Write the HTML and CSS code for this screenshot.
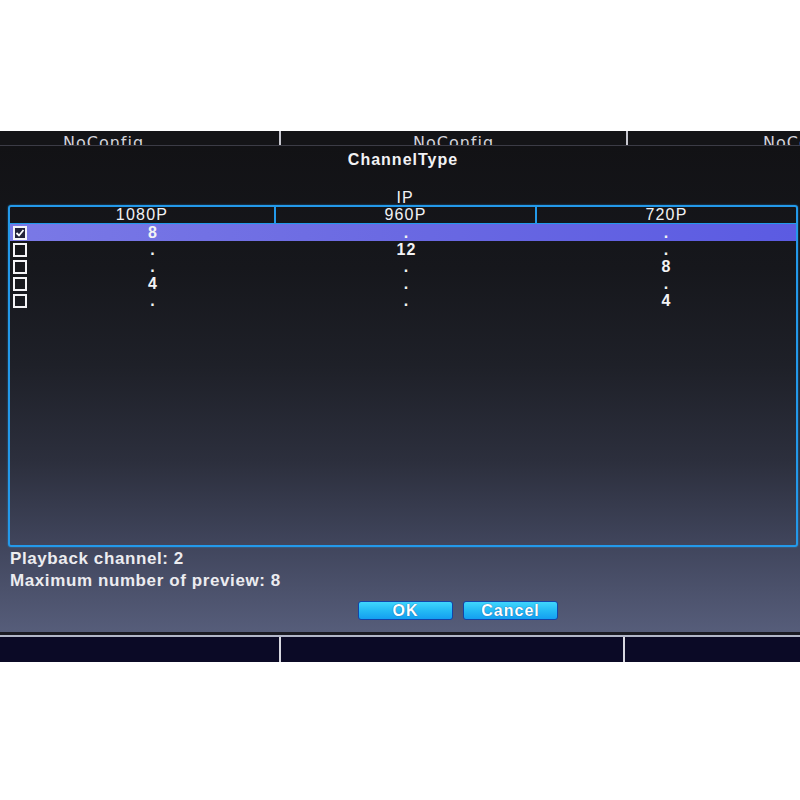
FILE: index.html
```html
<!DOCTYPE html>
<html>
<head>
<meta charset="utf-8">
<title>ChannelType</title>
<link rel="stylesheet" href="styles.css">
</head>
<body>
<div class="screen">
  <div class="strip-top">
    <div class="tcell t1"><span>NoConfig</span></div>
    <div class="tcell t2"><span>NoConfig</span></div>
    <div class="tcell t3"><span>NoConfig</span></div>
  </div>
  <div class="dialog">
    <div class="title">ChannelType</div>
    <div class="ip">IP</div>
    <div class="table">
      <div class="thead">
        <div class="th">1080P</div>
        <div class="th">960P</div>
        <div class="th last">720P</div>
      </div>
      <div class="row sel">
        <div class="cb"><svg width="14" height="14" viewBox="0 0 14 14"><rect x="1" y="1" width="12" height="12" fill="#23233a" stroke="#f4f4f8" stroke-width="2"/><polyline points="3.5,7 6,9.5 10.5,4" fill="none" stroke="#ffffff" stroke-width="1.8"/></svg></div>
        <div class="td">8</div><div class="td">.</div><div class="td">.</div>
      </div>
      <div class="row">
        <div class="cb"><svg width="14" height="14" viewBox="0 0 14 14"><rect x="1" y="1" width="12" height="12" fill="none" stroke="#f4f4f8" stroke-width="2"/></svg></div>
        <div class="td">.</div><div class="td">12</div><div class="td">.</div>
      </div>
      <div class="row">
        <div class="cb"><svg width="14" height="14" viewBox="0 0 14 14"><rect x="1" y="1" width="12" height="12" fill="none" stroke="#f4f4f8" stroke-width="2"/></svg></div>
        <div class="td">.</div><div class="td">.</div><div class="td">8</div>
      </div>
      <div class="row">
        <div class="cb"><svg width="14" height="14" viewBox="0 0 14 14"><rect x="1" y="1" width="12" height="12" fill="none" stroke="#f4f4f8" stroke-width="2"/></svg></div>
        <div class="td">4</div><div class="td">.</div><div class="td">.</div>
      </div>
      <div class="row">
        <div class="cb"><svg width="14" height="14" viewBox="0 0 14 14"><rect x="1" y="1" width="12" height="12" fill="none" stroke="#f4f4f8" stroke-width="2"/></svg></div>
        <div class="td">.</div><div class="td">.</div><div class="td">4</div>
      </div>
    </div>
    <div class="info">
      <div class="line">Playback channel: 2</div>
      <div class="line">Maximum number of preview: 8</div>
    </div>
    <div class="buttons">
      <div class="btn">OK</div>
      <div class="btn">Cancel</div>
    </div>
  </div>
  <div class="strip-bottom">
    <div class="bcells">
      <div class="bcell b1"></div>
      <div class="bcell b2"></div>
      <div class="bcell b3"></div>
    </div>
  </div>
</div>
</body>
</html>
```

FILE: styles.css
```css
html, body {
  margin: 0;
  padding: 0;
  background: #ffffff;
}

.screen {
  margin-top: 131px;
  width: 800px;
  height: 531px;
  overflow: hidden;
  display: flex;
  flex-direction: column;
  font-family: "Liberation Sans", Arial, sans-serif;
  color: #f2f2f4;
}

/* top strip behind the dialog */
.strip-top {
  height: 14px;
  flex: none;
  display: grid;
  grid-template-columns: 281px 347px 1fr;
  background: #141417;
  overflow: hidden;
}

.tcell {
  font-family: "DejaVu Sans", sans-serif;
  font-size: 16px;
  line-height: 18px;
  letter-spacing: 1px;
  color: #d4d4dc;
  padding-top: 3px;
  white-space: nowrap;
  overflow: hidden;
}

.t1 {
  border-right: 2px solid #c8c8d0;
  padding-left: 63px;
}

.t2 {
  border-right: 2px solid #c8c8d0;
  text-align: center;
}

.t3 {
  padding-left: 135px;
}

/* dialog */
.dialog {
  height: 487px;
  flex: none;
  box-sizing: border-box;
  border-top: 1px solid #3c3c46;
  background: linear-gradient(180deg, #121215 0%, #16171c 25%, #1e2028 45%, #2c2f3d 65%, #40455c 82%, #565d7a 100%);
  display: flex;
  flex-direction: column;
}

.title {
  padding-top: 4px;
  padding-left: 6px;
  font-size: 16px;
  line-height: 20px;
  font-weight: bold;
  letter-spacing: 1px;
  text-align: center;
}

.ip {
  margin-top: 20px;
  padding-left: 10px;
  font-size: 16px;
  line-height: 15px;
  letter-spacing: 1px;
  text-align: center;
}

.table {
  margin: 0 2px 0 8px;
  height: 342px;
  box-sizing: border-box;
  border: 2px solid #2399ea;
  border-radius: 3px;
  box-shadow: 0 0 2px rgba(40, 170, 255, 0.6);
}

.thead {
  display: grid;
  grid-template-columns: 266px 261px 1fr;
  height: 17px;
  box-sizing: border-box;
  border-bottom: 1px solid #2399ea;
}

.th {
  font-size: 16px;
  line-height: 16px;
  letter-spacing: 1.2px;
  text-align: center;
  border-right: 2px solid #2399ea;
}

.th.last {
  border-right: none;
}

.row {
  display: grid;
  grid-template-columns: 20px 246px 261px 1fr;
  height: 17px;
  align-items: center;
}

.row.sel {
  background: linear-gradient(90deg, #7a79e6 0%, #6a69e2 50%, #5b5be2 100%);
}

.cb {
  padding-left: 3px;
  height: 14px;
}

.cb svg {
  display: block;
}

.td {
  font-size: 16px;
  line-height: 17px;
  font-weight: bold;
  letter-spacing: 1px;
  text-align: center;
}

.info {
  margin-top: 1px;
  padding-left: 10px;
}

.line {
  font-size: 17px;
  line-height: 22px;
  font-weight: bold;
  letter-spacing: 0.6px;
  color: #ececf0;
}

.buttons {
  margin-top: 9px;
  padding-left: 358px;
  display: flex;
  gap: 10px;
}

.btn {
  width: 95px;
  height: 19px;
  box-sizing: border-box;
  border: 1px solid #1444a8;
  border-radius: 3px;
  background: linear-gradient(180deg, #40d6fd 0%, #22b8f4 55%, #149ff0 100%);
  font-size: 16px;
  line-height: 17px;
  font-weight: bold;
  letter-spacing: 1px;
  text-align: center;
  color: #ffffff;
  text-shadow: 0 0 1px #0a3a80;
}

/* bottom strip */
.strip-bottom {
  flex: 1;
  border-top: 3px solid #1a1a22;
  display: flex;
  flex-direction: column;
}

.bcells {
  flex: 1;
  display: grid;
  grid-template-columns: 281px 344px 1fr;
  border-top: 2px solid #b2b6c8;
  background: #0b0a26;
}

.b1, .b2 {
  border-right: 2px solid #d8d8e0;
}
```
